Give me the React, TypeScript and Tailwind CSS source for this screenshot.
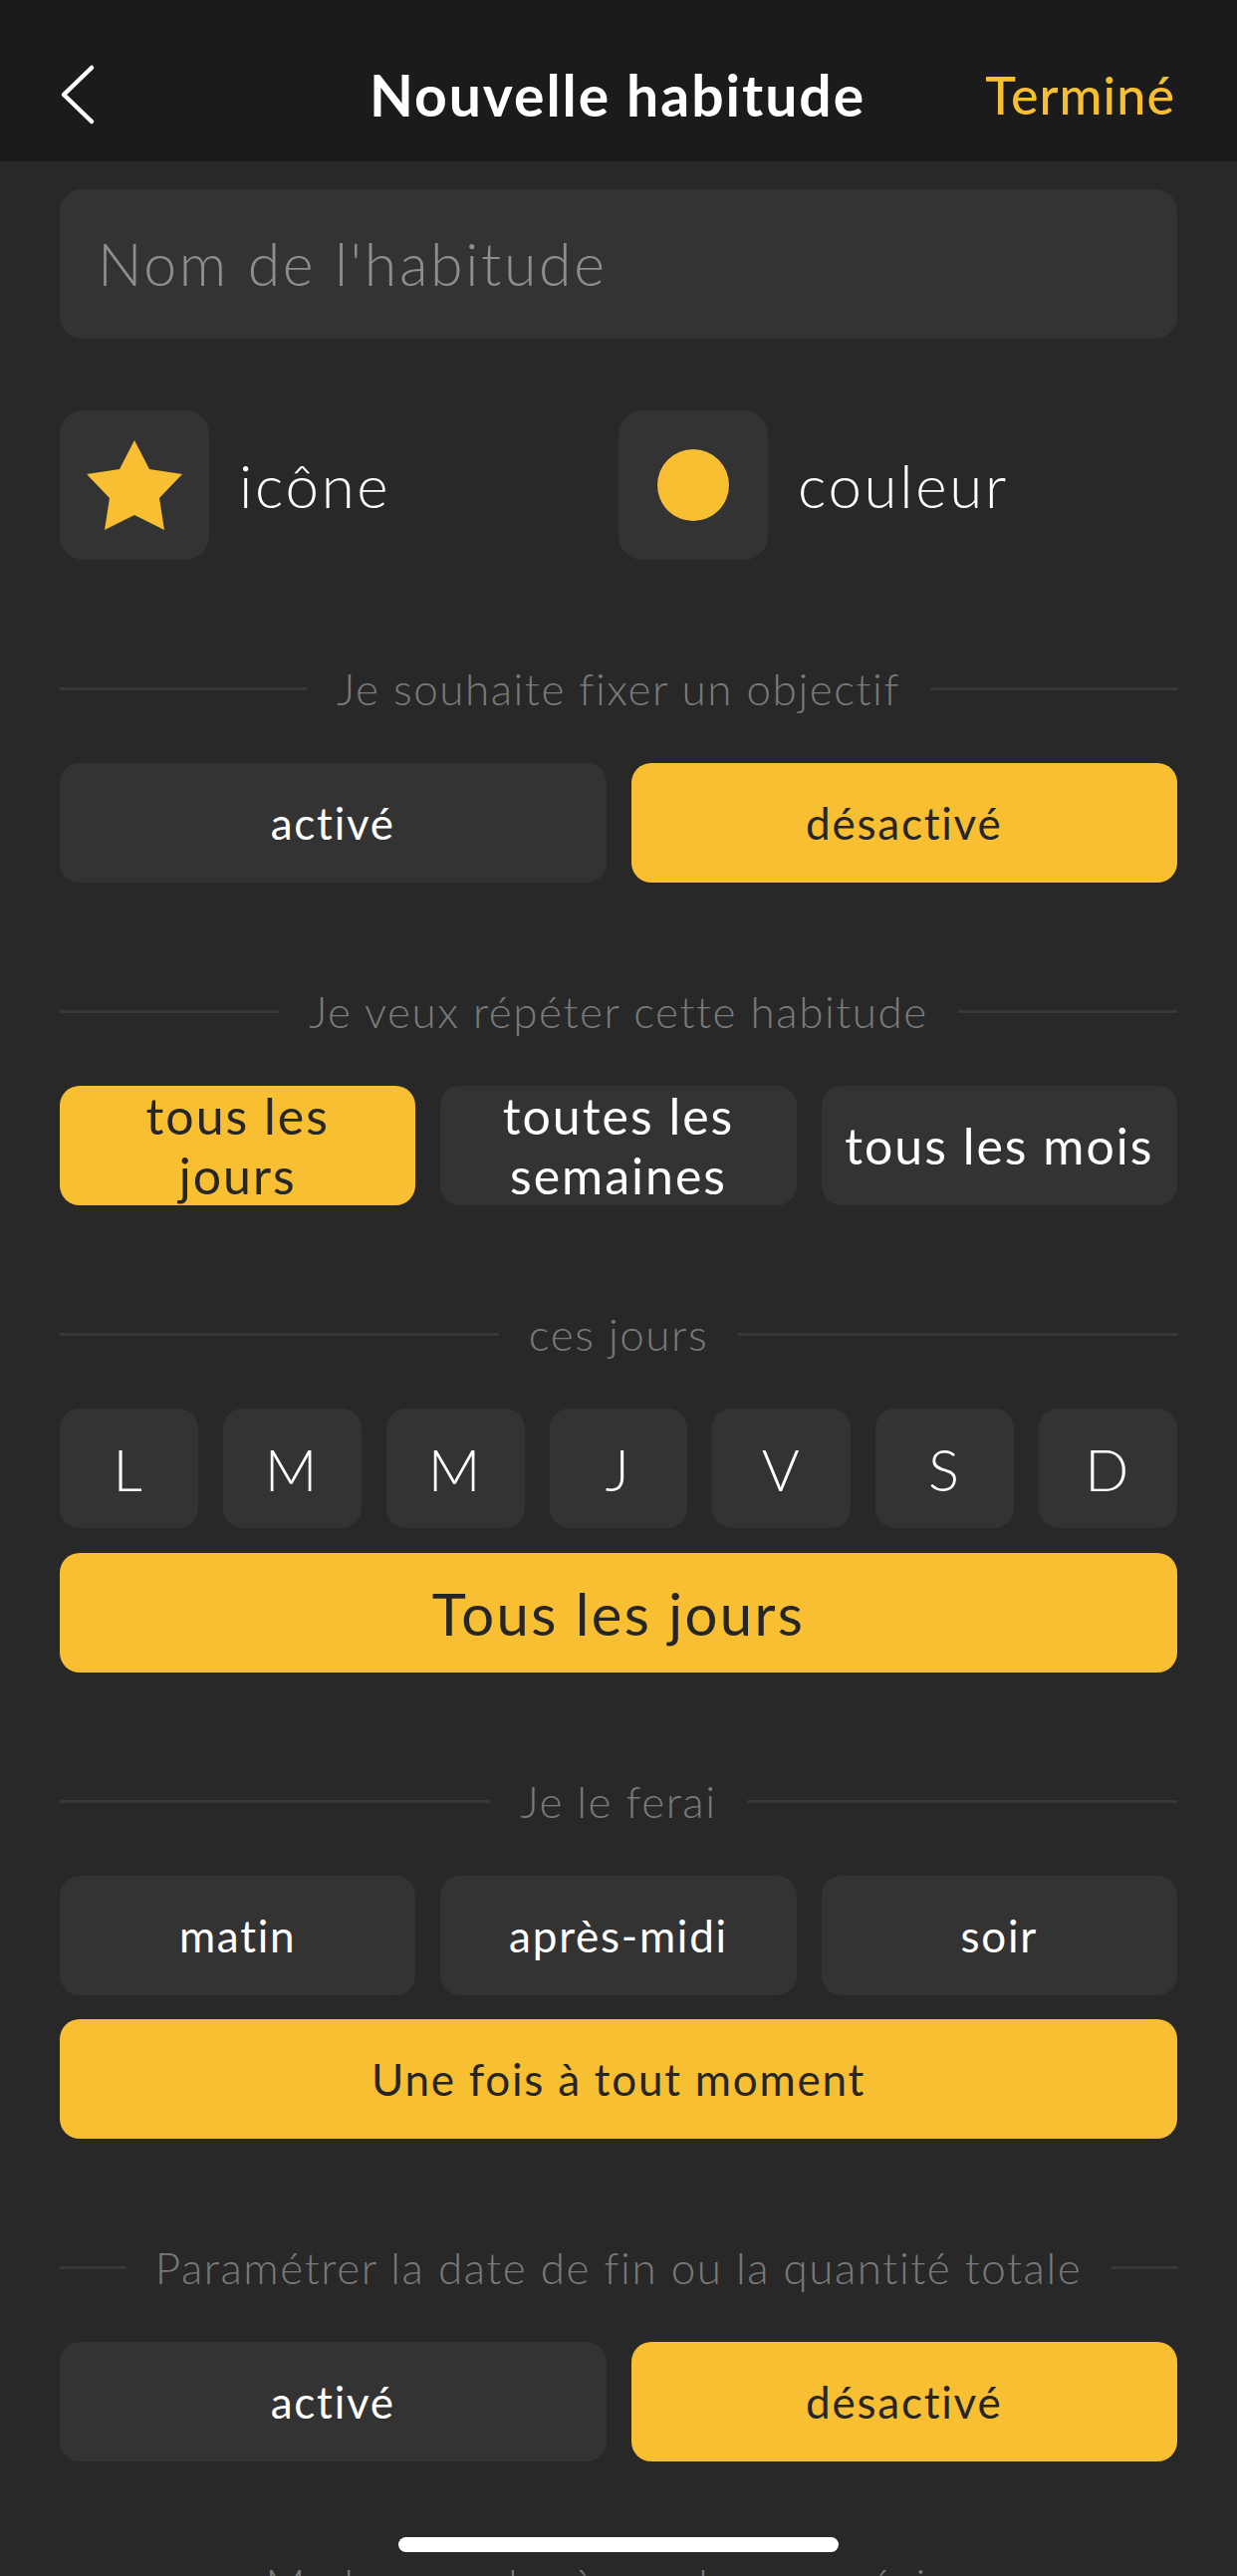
const freq = [
  { label: "tous les\njours", on: true },
  { label: "toutes les\nsemaines", on: false },
  { label: "tous les mois", on: false },
];

const days = ["L", "M", "M", "J", "V", "S", "D"];

const moments = ["matin", "après-midi", "soir"];

function Divider({ title, className = "" }: { title: string; className?: string }) {
  return (
    <div className={`flex h-[50px] items-center gap-[30px] ${className}`}>
      <div className="h-[3px] flex-1 bg-[#383838]" />
      <span className="whitespace-nowrap text-[44px] font-light leading-none tracking-[0.035em] text-[#7a7a7a]">
        {title}
      </span>
      <div className="h-[3px] flex-1 bg-[#383838]" />
    </div>
  );
}

function Pill({
  children,
  on = false,
  className = "",
}: {
  children: React.ReactNode;
  on?: boolean;
  className?: string;
}) {
  return (
    <div
      className={`flex h-[120px] items-center justify-center rounded-[20px] text-center tracking-[0.04em] ${
        on ? "bg-[#f8bf33] text-[#262626]" : "bg-[#333333] text-white"
      } ${className}`}
    >
      {children}
    </div>
  );
}

function Toggle() {
  return (
    <div className="mt-[50px] grid grid-cols-2 gap-[25px] text-[44px]">
      <Pill>activé</Pill>
      <Pill on>désactivé</Pill>
    </div>
  );
}

export default function App() {
  return (
    <div className="relative h-[2586px] w-[1242px] overflow-hidden bg-[#282828] font-['Lato',sans-serif]">
      {/* barre du haut */}
      <header className="grid h-[162px] grid-cols-[1fr_auto_1fr] items-center bg-[#1b1b1b] pl-[60px] pr-[62px] pt-[28px]">
        <svg width="36" height="62" viewBox="0 0 36 62" fill="none">
          <path
            d="M32 4 L4 31 L32 58"
            stroke="white"
            strokeWidth="4.5"
            strokeLinecap="round"
            strokeLinejoin="round"
          />
        </svg>
        <h1 className="text-[57px] font-bold leading-none tracking-[0.035em] text-white">
          Nouvelle habitude
        </h1>
        <span className="justify-self-end text-[52px] font-medium leading-none tracking-[0.02em] text-[#f8bf33]">
          Terminé
        </span>
      </header>

      <main className="flex flex-col px-[60px] pt-[28px]">
        <div className="flex h-[150px] items-center rounded-[22px] bg-[#333333] pl-[38px] text-[59px] font-light tracking-[0.045em] text-[#8e8e8e]">
          Nom de l'habitude
        </div>

        <div className="mt-[72px] grid grid-cols-2">
          <div className="flex items-center gap-[30px]">
            <div className="flex h-[150px] w-[150px] items-center justify-center rounded-[24px] bg-[#333333]">
              <svg width="150" height="150" viewBox="0 0 150 150">
                <polygon
                  points="75,30 90,59 123,64 100,88 105,120 75,105 45,120 50,88 27,64 60,59"
                  fill="#f8bf33"
                />
              </svg>
            </div>
            <span className="text-[60px] font-light tracking-[0.045em] text-white">icône</span>
          </div>
          <div className="flex items-center gap-[30px]">
            <div className="flex h-[150px] w-[150px] items-center justify-center rounded-[24px] bg-[#333333]">
              <div className="h-[72px] w-[72px] rounded-full bg-[#f8bf33]" />
            </div>
            <span className="text-[60px] font-light tracking-[0.045em] text-white">couleur</span>
          </div>
        </div>

        <Divider title="Je souhaite fixer un objectif" className="mt-[104px]" />
        <Toggle />

        <Divider title="Je veux répéter cette habitude" className="mt-[104px]" />
        <div className="mt-[50px] grid grid-cols-3 gap-[25px] text-[50px] leading-[60px]">
          {freq.map((f) => (
            <Pill key={f.label} on={f.on} className="whitespace-pre-line px-[12px]">
              {f.label}
            </Pill>
          ))}
        </div>

        <Divider title="ces jours" className="mt-[104px]" />
        <div className="mt-[50px] grid grid-cols-7 gap-[25px] text-[58px] font-light">
          {days.map((d, i) => (
            <Pill key={i}>{d}</Pill>
          ))}
        </div>
        <Pill on className="mt-[25px] text-[58px]">
          Tous les jours
        </Pill>

        <Divider title="Je le ferai" className="mt-[104px]" />
        <div className="mt-[50px] grid grid-cols-3 gap-[25px] text-[44px]">
          {moments.map((m) => (
            <Pill key={m}>{m}</Pill>
          ))}
        </div>
        <Pill on className="mt-[24px] text-[44px]">
          Une fois à tout moment
        </Pill>

        <Divider title="Paramétrer la date de fin ou la quantité totale" className="mt-[104px]" />
        <Toggle />

        <Divider title="Me le rappeler à une heure précise" className="mt-[98px]" />
      </main>

      <div className="absolute left-[400px] top-[2547px] h-[15px] w-[442px] rounded-full bg-white" />
    </div>
  );
}
